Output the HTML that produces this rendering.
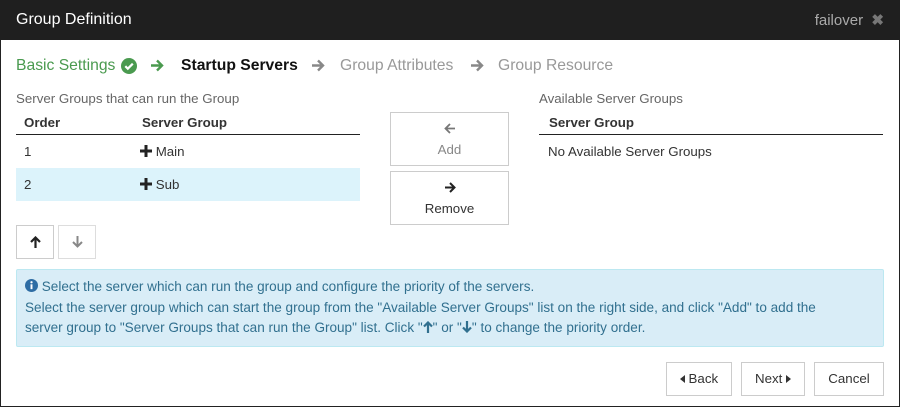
<!DOCTYPE html>
<html><head><style>
*{box-sizing:border-box;margin:0;padding:0}
body{width:900px;height:407px;background:#fff;font-family:"Liberation Sans",Arial,sans-serif;font-size:13.3px;color:#333;position:relative;overflow:hidden}
.frame{position:absolute;left:0;top:0;width:900px;height:407px;border:1px solid #222;border-top:none}
.title{position:absolute;left:0;top:0;width:900px;height:40px;background:#1f1f1f;color:#fff;font-size:16px}
.title .t{position:absolute;left:16px;top:11px}
.title .r{position:absolute;right:16px;top:11px;color:#aaa;font-size:15px}
.a{position:absolute;white-space:nowrap}
.st{position:absolute;top:57px;font-size:15.7px;white-space:nowrap}
.hdr{font-weight:bold;color:#333}
.btn{position:absolute;border:1px solid #ccc;background:#fff;text-align:center;color:#333}
.info{position:absolute;left:16px;top:269px;width:868px;height:78px;background:#d9edf7;border:1px solid #bce8f1;border-radius:2px;color:#31708f;padding:7px 0 0 8px;line-height:20.5px;font-size:13.55px}
svg.ar{position:absolute}
</style></head><body>
<div class="frame"></div>
<div class="title"><span class="t">Group Definition</span><span class="r">failover &nbsp;<b style="color:#777">✖</b></span></div>

<div class="st" style="left:16px;color:#4a9a4f">Basic Settings</div>
<svg class="ar" style="left:121px;top:58px" width="16" height="16" viewBox="0 0 16 16"><circle cx="8" cy="8" r="8" fill="#4a9a4f"/><path d="M4.3 8.2l2.5 2.5 5-5" stroke="#fff" stroke-width="2.2" fill="none"/></svg>
<svg class="ar" style="left:150px;top:59px" width="14" height="13" viewBox="0 0 14 13"><path d="M1 6.5h11M7 1.5l5 5-5 5" stroke="#4a9a4f" stroke-width="2.4" fill="none"/></svg>
<div class="st" style="left:181px;color:#111;font-weight:bold">Startup Servers</div>
<svg class="ar" style="left:311px;top:59px" width="14" height="13" viewBox="0 0 14 13"><path d="M1 6.5h11M7 1.5l5 5-5 5" stroke="#888" stroke-width="2.4" fill="none"/></svg>
<div class="st" style="left:340px;color:#999">Group Attributes</div>
<svg class="ar" style="left:470px;top:59px" width="14" height="13" viewBox="0 0 14 13"><path d="M1 6.5h11M7 1.5l5 5-5 5" stroke="#888" stroke-width="2.4" fill="none"/></svg>
<div class="st" style="left:498px;color:#999">Group Resource</div>

<div class="a" style="left:16px;top:91px;color:#666">Server Groups that can run the Group</div>
<div class="a hdr" style="left:24px;top:115px">Order</div>
<div class="a hdr" style="left:142px;top:115px">Server Group</div>
<div class="a" style="left:16px;top:134px;width:344px;border-top:1px solid #222"></div>
<div class="a" style="left:24px;top:144px">1</div>
<div class="a" style="left:140px;top:144px"><svg width="12" height="12" viewBox="0 0 12 12" style="vertical-align:-1px"><path d="M6 0v12M0 6h12" stroke="#222" stroke-width="3"/></svg> Main</div>
<div class="a" style="left:16px;top:168px;width:344px;height:33px;background:#dcf3fb"></div>
<div class="a" style="left:24px;top:177px">2</div>
<div class="a" style="left:140px;top:177px"><svg width="12" height="12" viewBox="0 0 12 12" style="vertical-align:-1px"><path d="M6 0v12M0 6h12" stroke="#222" stroke-width="3"/></svg> Sub</div>

<div class="btn" style="left:390px;top:112px;width:119px;height:54px;color:#888;padding-top:7px;line-height:20px"><svg width="12" height="11" viewBox="0 0 12 11"><path d="M11 5.5H2M6 1L1.5 5.5 6 10" stroke="#777" stroke-width="1.8" fill="none"/></svg><br>Add</div>
<div class="btn" style="left:390px;top:171px;width:119px;height:54px;padding-top:7px;line-height:20px"><svg width="12" height="11" viewBox="0 0 12 11"><path d="M1 5.5h9M6 1l4.5 4.5L6 10" stroke="#222" stroke-width="2" fill="none"/></svg><br>Remove</div>

<div class="a" style="left:539px;top:91px;color:#666">Available Server Groups</div>
<div class="a hdr" style="left:549px;top:115px">Server Group</div>
<div class="a" style="left:539px;top:134px;width:344px;border-top:1px solid #222"></div>
<div class="a" style="left:548px;top:144px">No Available Server Groups</div>

<div class="btn" style="left:16px;top:225px;width:38px;height:34px;padding-top:10px"><svg width="11" height="12" viewBox="0 0 11 12"><path d="M5.5 12V2M1 6l4.5-4.5L10 6" stroke="#222" stroke-width="2.2" fill="none"/></svg></div>
<div class="btn" style="left:58px;top:225px;width:38px;height:34px;padding-top:10px;border-color:#ddd"><svg width="11" height="12" viewBox="0 0 11 12"><path d="M5.5 0v10M1 6l4.5 4.5L10 6" stroke="#888" stroke-width="2" fill="none"/></svg></div>

<div class="info"><svg width="13" height="13" viewBox="0 0 16 16" style="vertical-align:-1px"><circle cx="8" cy="8" r="8" fill="#2e6da4"/><rect x="6.8" y="6.5" width="2.4" height="6" fill="#fff"/><circle cx="8" cy="4" r="1.4" fill="#fff"/></svg> Select the server which can run the group and configure the priority of the servers.<br>Select the server group which can start the group from the "Available Server Groups" list on the right side, and click "Add" to add the<br>server group to "Server Groups that can run the Group" list. Click "<svg width="10" height="12" viewBox="0 0 10 12" style="vertical-align:-1px"><path d="M5 12V2M1 5.5l4-4 4 4" stroke="#31708f" stroke-width="2.2" fill="none"/></svg>" or "<svg width="10" height="12" viewBox="0 0 10 12" style="vertical-align:-1px"><path d="M5 0v10M1 6.5l4 4 4-4" stroke="#31708f" stroke-width="2.2" fill="none"/></svg>" to change the priority order.</div>

<div class="btn" style="left:666px;top:362px;width:66px;height:34px;line-height:32px"><svg width="5" height="8" viewBox="0 0 5 8"><path d="M5 0v8L0 4z" fill="#333"/></svg>&nbsp;Back</div>
<div class="btn" style="left:741px;top:362px;width:64px;height:34px;line-height:32px">Next&nbsp;<svg width="5" height="8" viewBox="0 0 5 8"><path d="M0 0v8l5-4z" fill="#333"/></svg></div>
<div class="btn" style="left:814px;top:362px;width:70px;height:34px;line-height:32px">Cancel</div>
</body></html>
